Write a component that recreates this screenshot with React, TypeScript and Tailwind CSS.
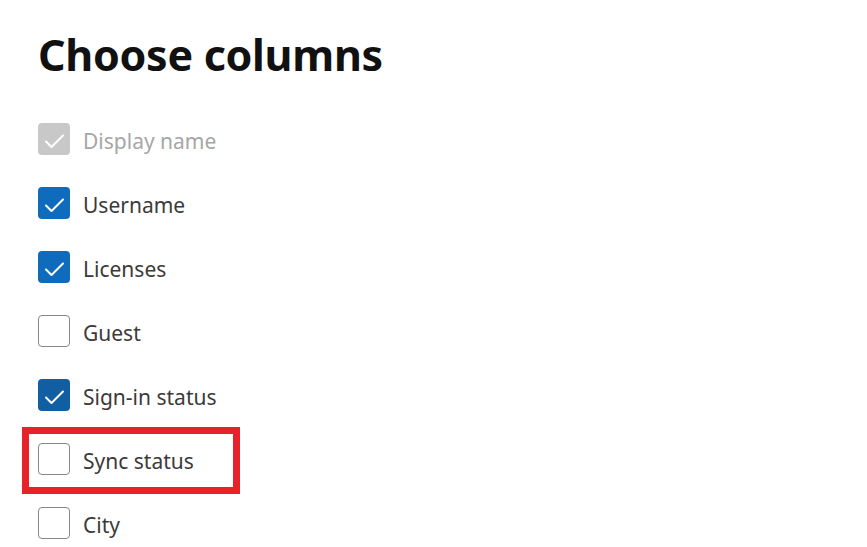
import React from "react";

type Item = {
  id: number;
  label: string;
  state: "disabled" | "checked" | "checkedDark" | "empty";
  marked?: boolean;
};

const items: Item[] = [
  { id: 1, label: "Display name", state: "disabled" },
  { id: 2, label: "Username", state: "checked" },
  { id: 3, label: "Licenses", state: "checked" },
  { id: 4, label: "Guest", state: "empty" },
  { id: 5, label: "Sign-in status", state: "checkedDark" },
  { id: 6, label: "Sync status", state: "empty", marked: true },
  { id: 7, label: "City", state: "empty" },
];

const Check = () => (
  <svg width="32" height="32" viewBox="0 0 32 32" fill="none">
    <path
      d="M8 18.5 L13.5 24 L25 12.5"
      stroke="white"
      strokeWidth="2"
      strokeLinecap="round"
      strokeLinejoin="round"
    />
  </svg>
);

const Box = ({ state }: { state: Item["state"] }) => {
  if (state === "empty") {
    return <div className="h-8 w-8 rounded-[4px] border-[1.5px] border-[#8a8886] bg-white" />;
  }
  const bg =
    state === "disabled"
      ? "bg-[#c8c8c8]"
      : state === "checkedDark"
        ? "bg-[#115ea3]"
        : "bg-[#0f6cbd]";
  return (
    <div className={`h-8 w-8 rounded-[4px] ${bg}`}>
      <Check />
    </div>
  );
};

const App = () => {
  return (
    <div
      className="min-h-[547px] w-[867px] bg-white pl-[38px] pt-[27px]"
      style={{ fontFamily: '"Noto Sans", sans-serif' }}
    >
      <h1 className="text-[43px] font-bold leading-[56px] tracking-[-0.3px] text-[#111]">
        Choose columns
      </h1>
      <ul className="mt-[24px]">
        {items.map((item) => (
          <li key={item.id} className="relative flex h-16 items-center gap-[13px]">
            {item.marked && (
              <div className="absolute -left-4 top-0 h-[67px] w-[218px] border-[7px] border-[#e8222a]" />
            )}
            <Box state={item.state} />
            <span
              className={`pt-[6px] text-[21px] ${
                item.state === "disabled" ? "text-[#a6a6a6]" : "text-[#3b3a39]"
              }`}
            >
              {item.label}
            </span>
          </li>
        ))}
      </ul>
    </div>
  );
};

export default App;
